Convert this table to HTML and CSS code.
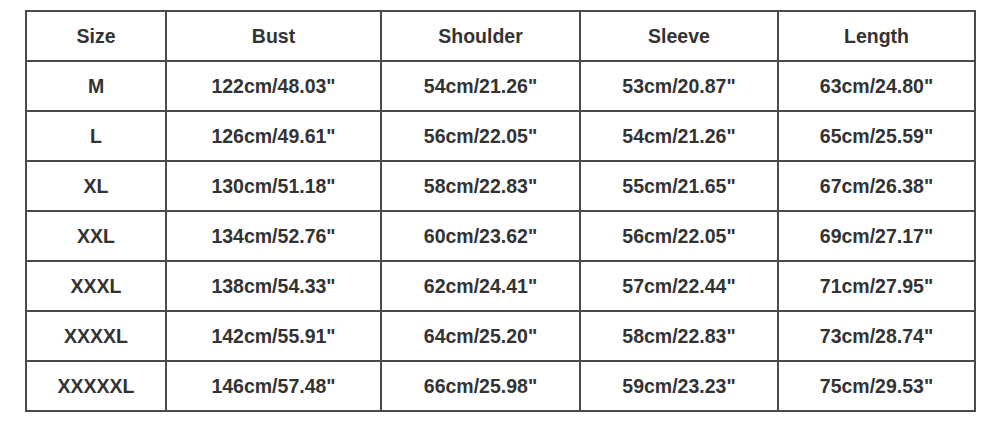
FILE: index.html
```html
<!DOCTYPE html>
<html>
<head>
<meta charset="utf-8">
<link rel="stylesheet" href="styles.css">
</head>
<body>
<table class="size-table">
  <colgroup>
    <col class="c-size">
    <col class="c-bust">
    <col class="c-shoulder">
    <col class="c-sleeve">
    <col class="c-length">
  </colgroup>
  <thead>
    <tr><th>Size</th><th>Bust</th><th>Shoulder</th><th>Sleeve</th><th>Length</th></tr>
  </thead>
  <tbody>
    <tr><td>M</td><td>122cm/48.03"</td><td>54cm/21.26"</td><td>53cm/20.87"</td><td>63cm/24.80"</td></tr>
    <tr><td>L</td><td>126cm/49.61"</td><td>56cm/22.05"</td><td>54cm/21.26"</td><td>65cm/25.59"</td></tr>
    <tr><td>XL</td><td>130cm/51.18"</td><td>58cm/22.83"</td><td>55cm/21.65"</td><td>67cm/26.38"</td></tr>
    <tr><td>XXL</td><td>134cm/52.76"</td><td>60cm/23.62"</td><td>56cm/22.05"</td><td>69cm/27.17"</td></tr>
    <tr><td>XXXL</td><td>138cm/54.33"</td><td>62cm/24.41"</td><td>57cm/22.44"</td><td>71cm/27.95"</td></tr>
    <tr><td>XXXXL</td><td>142cm/55.91"</td><td>64cm/25.20"</td><td>58cm/22.83"</td><td>73cm/28.74"</td></tr>
    <tr><td>XXXXXL</td><td>146cm/57.48"</td><td>66cm/25.98"</td><td>59cm/23.23"</td><td>75cm/29.53"</td></tr>
  </tbody>
</table>
</body>
</html>
```

FILE: styles.css
```css
html, body {
  margin: 0;
  padding: 0;
  background: #ffffff;
}
body {
  padding: 10px 0 0 25px;
}
.size-table {
  border-collapse: collapse;
  table-layout: fixed;
  width: 949px;
  font-family: "Liberation Sans", Arial, sans-serif;
  font-weight: bold;
  font-size: 19.5px;
  color: #333333;
}
.c-size { width: 140px; }
.c-bust { width: 215px; }
.c-shoulder { width: 199px; }
.c-sleeve { width: 198px; }
.c-length { width: 197px; }
.size-table th,
.size-table td {
  border: 2px solid #4a4a4a;
  height: 48px;
  padding: 0;
  text-align: center;
  vertical-align: middle;
  font-weight: bold;
}
```
